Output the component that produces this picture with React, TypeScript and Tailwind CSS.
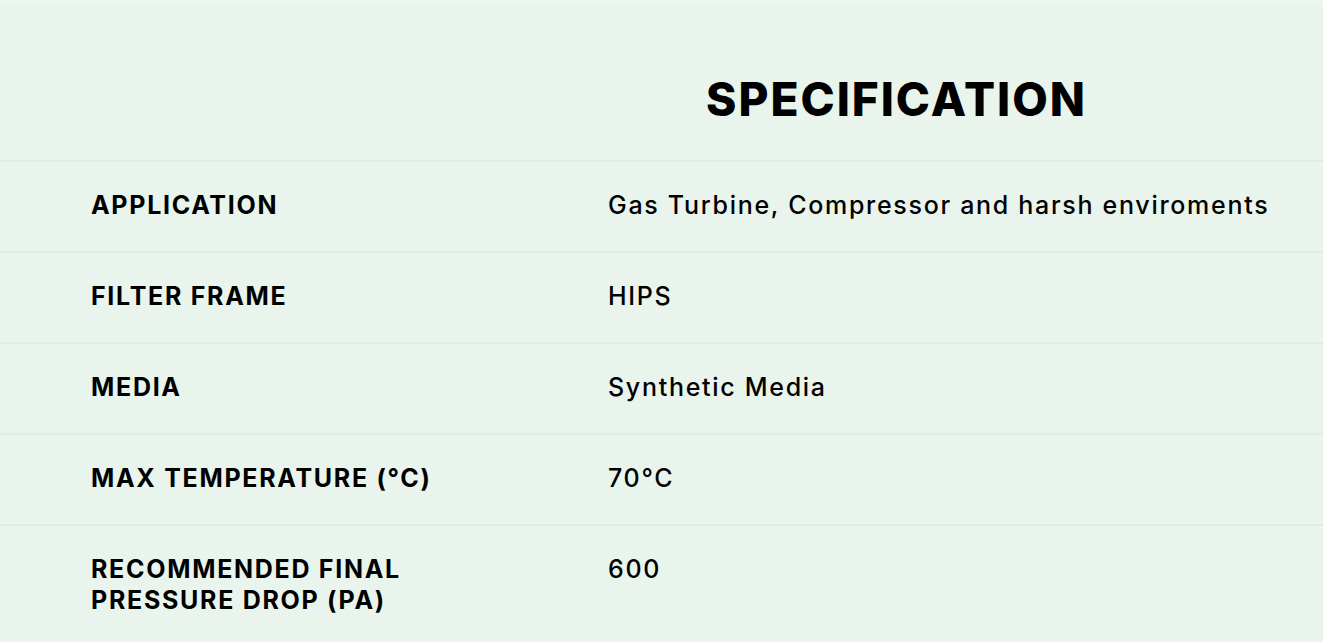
const rows: { label: string[]; value: string }[] = [
  { label: ['APPLICATION'], value: 'Gas Turbine, Compressor and harsh enviroments' },
  { label: ['FILTER FRAME'], value: 'HIPS' },
  { label: ['MEDIA'], value: 'Synthetic Media' },
  { label: ['MAX TEMPERATURE (°C)'], value: '70°C' },
  { label: ['RECOMMENDED FINAL', 'PRESSURE DROP (PA)'], value: '600' },
];

function App() {
  return (
    <div className="min-h-screen bg-[#e8f4ec] text-black font-['Inter',sans-serif] border-t-2 border-[#eef6f0]">
      <div className="h-[158px] flex justify-center pl-[470px] pt-[74px]">
        <h2 className="text-[46px] font-extrabold tracking-[2px] leading-none">SPECIFICATION</h2>
      </div>
      {rows.map((r) => (
        <div key={r.value} className="flex border-t-2 border-[#dfebe3] h-[91px] pt-[28px]">
          <div className="w-[608px] pl-[91px] text-[25px] font-bold tracking-[1.7px] leading-[31px]">
            {r.label.map((l) => (
              <div key={l}>{l}</div>
            ))}
          </div>
          <div className="text-[25px] font-medium tracking-[1.7px] leading-[31px]">{r.value}</div>
        </div>
      ))}
    </div>
  );
}

export default App;
